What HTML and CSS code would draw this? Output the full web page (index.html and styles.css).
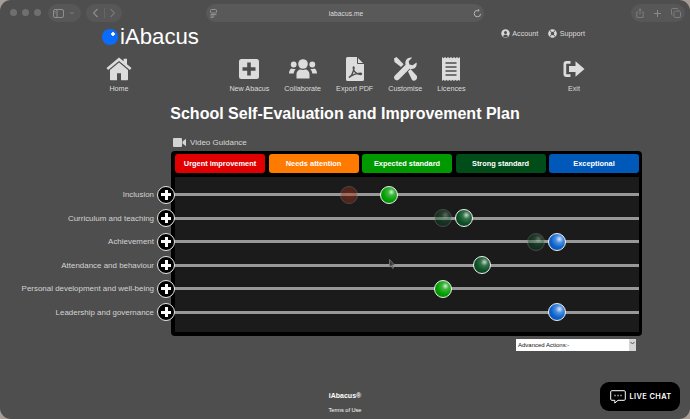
FILE: index.html
```html
<!DOCTYPE html>
<html lang="en">
<head>
<meta charset="utf-8">
<title>iAbacus</title>
<link rel="stylesheet" href="styles.css">
</head>
<body>
<div class="window">
  <div class="chrome">
    <div class="lights"><i></i><i></i><i></i></div>
    <div class="pill side">
      <svg width="11" height="9" viewBox="0 0 11 9" fill="none" stroke="#8f8f8f"><rect x=".5" y=".5" width="10" height="8" rx="1.5"/><path d="M4 .5v8"/><path d="M1.5 2.5h1M1.5 4h1"/></svg>
      <svg width="6" height="4" viewBox="0 0 6 4" fill="none" stroke="#7c7c7c"><path d="M1 1l2 2 2-2"/></svg>
    </div>
    <div class="pill navpill">
      <svg width="7" height="10" viewBox="0 0 7 10" fill="none" stroke="#8f8f8f" stroke-width="1.1"><path d="M5.5 1L1.5 5l4 4"/></svg>
      <span class="sep"></span>
      <svg width="7" height="10" viewBox="0 0 7 10" fill="none" stroke="#777" stroke-width="1.1"><path d="M1.5 1l4 4-4 4"/></svg>
    </div>
    <div class="address">
      <svg width="7" height="9" viewBox="0 0 7 9" fill="none" stroke="#999" stroke-width=".9"><rect x=".5" y=".5" width="6" height="3.5" rx="1"/><path d="M.5 5.5h6M.5 7h4M.5 8.4h3"/></svg>
      <span class="url">iabacus.me</span>
      <svg width="9" height="9" viewBox="0 0 9 9" fill="none" stroke="#b5b5b5" stroke-width="1"><path d="M7.6 4.8A3.2 3.2 0 1 1 4.5 1.4H6"/><path d="M4.8.2L6.2 1.4 4.8 2.6" /></svg>
    </div>
    <div class="pill tools">
      <svg width="8" height="10" viewBox="0 0 8 10" fill="none" stroke="#7e7e7e"><path d="M2 4H.8v5.4h6.4V4H6M4 6.5V.8M2.5 2.2L4 .8l1.5 1.4"/></svg>
      <svg width="9" height="9" viewBox="0 0 9 9" fill="none" stroke="#8a8a8a"><path d="M4.5 1v7M1 4.5h7"/></svg>
      <svg width="10" height="10" viewBox="0 0 10 10" fill="none" stroke="#7e7e7e"><rect x="3" y="3" width="6.5" height="6.5" rx="1.5"/><path d="M7 1.5A1 1 0 0 0 6 .5H1.5a1 1 0 0 0-1 1V6a1 1 0 0 0 1 1"/></svg>
    </div>
  </div>

  <header class="masthead">
    <div class="logo"><span class="logo-dot"></span><span class="logo-text">iAbacus</span></div>
    <div class="links">
      <a class="link"><svg width="9" height="9" viewBox="0 0 9 9"><circle cx="4.5" cy="4.5" r="4.2" fill="#d8d8d8"/><circle cx="4.5" cy="3.4" r="1.5" fill="#4d4d4d"/><path d="M2 7.2a2.6 2.2 0 0 1 5 0 3.5 3.5 0 0 1-5 0z" fill="#4d4d4d"/></svg>Account</a>
      <a class="link"><svg width="9" height="9" viewBox="0 0 9 9"><circle cx="4.5" cy="4.5" r="4.3" fill="#d8d8d8"/><circle cx="4.5" cy="4.5" r="1.7" fill="#4d4d4d"/><path d="M2 1.4l1.4 2M7 1.4L5.6 3.4M2 7.6l1.4-2M7 7.6L5.6 5.6" stroke="#4d4d4d" stroke-width="1"/></svg>Support</a>
    </div>
  </header>

  <nav class="mainnav">
    <a class="nav-item">
      <svg class="icon" width="26" height="24" viewBox="0 0 26 24" fill="#dcdcdc"><path d="M13 5.5L4 13v9.2c0 .6.4 1 1 1h6v-7h4v7h6c.6 0 1-.4 1-1V13z"/><path d="M13 .5L.5 11l1.6 2L13 3.9 23.900 13l1.600-2L21 7.200V1.800h-3.400v2.500z"/></svg>
      <span>Home</span>
    </a>
    <div class="nav-group">
      <a class="nav-item">
        <svg class="icon" width="20" height="24" viewBox="0 0 20 20"><rect width="20" height="20" rx="2.5" fill="#dcdcdc"/><path d="M8.2 3.5h3.6v4.700h4.700v3.600h-4.700v4.700H8.200v-4.700H3.500V8.200h4.700z" fill="#4d4d4d"/></svg>
        <span>New Abacus</span>
      </a>
      <a class="nav-item">
        <svg class="icon" width="28" height="24" viewBox="0 0 28 20" fill="#dcdcdc"><circle cx="14" cy="5" r="4.8"/><circle cx="4.7" cy="5.5" r="2.9"/><circle cx="23.3" cy="5.5" r="2.9"/><path d="M7.500 19.500v-4c0-3.300 2.500-5 4-5 1 .6 4 .6 5 0 1.500 0 4 1.700 4 5v4z"/><path d="M0 14.500c0-3 1.500-5 3-5 1 .7 2.500.7 3.700.4-1.200 1.200-1.900 3-2 4.600z"/><path d="M28 14.500c0-3-1.500-5-3-5-1 .7-2.500.7-3.700.4 1.200 1.200 1.900 3 2 4.600z"/></svg>
        <span>Collaborate</span>
      </a>
      <a class="nav-item">
        <svg class="icon" width="18" height="24" viewBox="0 0 18 24"><path d="M1.500 0H11l7 7v15.500A1.500 1.500 0 0 1 16.500 24h-15A1.500 1.500 0 0 1 0 22.500v-21A1.500 1.500 0 0 1 1.500 0z" fill="#dcdcdc"/><path d="M11.500 0v6.500H18" fill="none" stroke="#4d4d4d" stroke-width="1"/><path d="M3 20.500c2-1 4-4.500 5-9 .4-2-.8-2.200-.8-.6 0 3 3 6.200 7.500 6.600 1.400 0 1.200-1.400-.5-1.300-3 .2-7 1.200-9.500 2.900-1.200.8-1.700 1.400-1.700 1.400z" fill="none" stroke="#4d4d4d" stroke-width="1.300"/></svg>
        <span>Export PDF</span>
      </a>
      <a class="nav-item">
        <svg class="icon" width="24" height="24" viewBox="0 0 24 24" fill="#dcdcdc"><path d="M1 1.500L3.500 0l7.200 7.200-2.700 2.800L1.500 5z"/><path d="M15 14.500l2.500-2.500 6 6.500c1 1.200.8 3-.4 4.200-1.300 1.200-3 1.300-4.200 0z"/><path d="M23.500 5.500c.6 2.500-.2 4.500-2 5.800-1.400 1-3.300 1-4.900.4L5.900 22.600c-1.100 1.100-2.800 1.100-4 0-1.200-1.200-1.200-3 0-4.200L12.600 7.700c-.6-2-.3-3.800 1.100-5.400C15.100.8 17.100.1 19.200.6l-3.500 3.600.7 3.200 3.300.8z"/></svg>
        <span>Customise</span>
      </a>
      <a class="nav-item">
        <svg class="icon" width="18" height="24" viewBox="0 0 18 24" fill="#dcdcdc"><path d="M0 0l1.500 1.200L3 0l1.500 1.200L6 0l1.500 1.200L9 0l1.500 1.200L12 0l1.500 1.200L15 0l1.500 1.200L18 0v24l-1.500-1.200L15 24l-1.500-1.200L12 24l-1.500-1.200L9 24l-1.500-1.200L6 24l-1.500-1.200L3 24l-1.500-1.200L0 24z"/><path d="M3.500 6h11M3.500 10h11M3.500 14h11M3.500 18h11" stroke="#4d4d4d" stroke-width="1.400"/></svg>
        <span>Licences</span>
      </a>
    </div>
    <a class="nav-item">
      <svg class="icon" width="22" height="24" viewBox="0 0 22 18" fill="#dcdcdc"><path d="M7.500 1H3.500A3 3 0 0 0 .5 4v10a3 3 0 0 0 3 3h4v-2.700H3.800c-.3 0-.6-.3-.6-.6V4.300c0-.3.300-.6.600-.6h3.700z"/><path d="M12.500 1.300L21.500 9l-9 7.700V12H6V6h6.500z"/></svg>
      <span>Exit</span>
    </a>
  </nav>

  <h1 class="title">School Self-Evaluation and Improvement Plan</h1>

  <main class="content">
    <div class="guidance">
      <svg width="13" height="9" viewBox="0 0 13 9" fill="#d4d4d4"><rect width="9" height="9" rx="1"/><path d="M9.500 3.500L13 .8v7.400L9.500 5.500z"/></svg>
      <span>Video Guidance</span>
    </div>
    <section class="panel">
      <div class="levels">
        <div class="level urgent">Urgent improvement</div>
        <div class="level needs">Needs attention</div>
        <div class="level expected">Expected standard</div>
        <div class="level strong">Strong standard</div>
        <div class="level exceptional">Exceptional</div>
      </div>
      <div class="rows">
        <div class="row"><span class="row-label">Inclusion</span><button class="plus"></button>
          <div class="track"><i class="knob ghost red" style="left:178px"></i><i class="knob green" style="left:218px"></i></div></div>
        <div class="row"><span class="row-label">Curriculum and teaching</span><button class="plus"></button>
          <div class="track"><i class="knob ghost dark" style="left:272px"></i><i class="knob dark" style="left:293px"></i></div></div>
        <div class="row"><span class="row-label">Achievement</span><button class="plus"></button>
          <div class="track"><i class="knob ghost dark" style="left:365px"></i><i class="knob blue" style="left:386px"></i></div></div>
        <div class="row"><span class="row-label">Attendance and behaviour</span><button class="plus"></button>
          <div class="track"><i class="knob dark" style="left:311px"></i></div></div>
        <div class="row"><span class="row-label">Personal development and well-being</span><button class="plus"></button>
          <div class="track"><i class="knob green" style="left:272px"></i></div></div>
        <div class="row"><span class="row-label">Leadership and governance</span><button class="plus"></button>
          <div class="track"><i class="knob blue" style="left:386px"></i></div></div>
      </div>
    </section>
    <div class="actions">
      <div class="select"><span>Advanced Actions:-</span><b class="select-arrow"><svg width="5" height="4" viewBox="0 0 5 4" fill="none" stroke="#555"><path d="M.5 1l2 2 2-2"/></svg></b></div>
    </div>
  </main>

  <footer class="footer">
    <strong>iAbacus®</strong>
    <a>Terms of Use</a>
  </footer>

  <svg class="cursor" width="7" height="10" viewBox="0 0 7 10" fill="#3a3a3a" stroke="#888" stroke-width=".7"><path d="M.5.500v7.500l1.800-1.500 1.300 3 1-.5-1.300-2.900 2.300-.2z"/></svg>

  <div class="chat">
    <svg width="16" height="14" viewBox="0 0 16 14" fill="none" stroke="#fff" stroke-width="1"><path d="M1.800.7h12.400c.6 0 1.100.5 1.100 1.100v7.400c0 .6-.5 1.100-1.100 1.100H8l-3.200 2.800v-2.800h-3c-.6 0-1.100-.5-1.100-1.100V1.800C.7 1.200 1.200.7 1.800.7z"/><path d="M4.500 5.500h1M7.500 5.500h1M10.500 5.500h1" stroke-width="1.300"/></svg>
    <span>LIVE CHAT</span>
  </div>
</div>
</body>
</html>
```
FILE: styles.css
```css
* { box-sizing: border-box; }
html, body { margin: 0; height: 100%; background: #a89c96; overflow: hidden; }
body { font-family: "Liberation Sans", Arial, sans-serif; color: #dcdcdc; }
a { color: inherit; text-decoration: none; }

.window {
  position: relative;
  width: 690px;
  height: 419px;
  background: #4e4e4e;
  border-radius: 11px;
  overflow: hidden;
  display: flex;
  flex-direction: column;
}

.chrome {
  height: 26px;
  flex: none;
  display: flex;
  align-items: flex-start;
  padding: 4px 5px 0 10px;
}
.lights { display: flex; gap: 5px; margin-top: 5px; width: 38px; }
.lights i { width: 7px; height: 7px; border-radius: 50%; background: #6f6f6f; }
.pill {
  height: 18px;
  border-radius: 9px;
  background: #575757;
  display: flex;
  align-items: center;
  justify-content: space-between;
}
.side { width: 33px; padding: 0 6px 0 5px; }
.navpill { width: 36px; margin-left: 5px; padding: 0 6px; }
.sep { width: 1px; height: 10px; background: #666; }
.address {
  width: 278px;
  height: 18px;
  margin-left: 84px;
  border-radius: 9px;
  background: #595959;
  display: flex;
  align-items: center;
  padding: 0 2px 0 4px;
  justify-content: space-between;
}
.url { font-size: 6.6px; color: #dcdcdc; margin-left: 2px; letter-spacing: .1px; }
.tools { width: 54px; margin-left: auto; padding: 0 4px 0 5px; }

.masthead {
  height: 26px;
  flex: none;
  display: flex;
  justify-content: space-between;
  align-items: flex-start;
  padding: 0 105px 0 102px;
}
.logo { display: flex; align-items: center; height: 22px; }
.logo-dot {
  width: 16px;
  height: 16px;
  border-radius: 50%;
  margin-right: 2px;
  background: radial-gradient(circle at 11px 5px, #fff 0 1.5px, #0a6cff 2px);
}
.logo-text { font-size: 22.2px; color: #fff; line-height: 22px; }
.links { display: flex; gap: 10px; margin-top: 2px; }
.link { display: flex; align-items: center; gap: 2.5px; font-size: 7.2px; height: 10px; color: #dcdcdc; }

.mainnav {
  flex: none;
  height: 44px;
  margin-top: 5px;
  display: flex;
  justify-content: space-between;
  align-items: flex-start;
  padding: 0 105px 0 106px;
}
.nav-group { display: flex; gap: 15px; }
.nav-item {
  display: flex;
  flex-direction: column;
  align-items: center;
  font-size: 7.2px;
  color: #dcdcdc;
}
.icon { height: 24px; flex: none; margin-bottom: 3px; }
.nav-item span { line-height: 9px; white-space: nowrap; }

.title {
  margin: 2px 0 0;
  height: 22px;
  font-size: 16px;
  line-height: 22px;
  font-weight: bold;
  color: #fff;
  text-align: center;
}

.content { flex: none; padding-left: 171px; margin-top: 11px; }
.guidance {
  display: flex;
  align-items: center;
  gap: 4px;
  padding-left: 2px;
  height: 12px;
  font-size: 8px;
  color: #d8d8d8;
}
.panel {
  width: 471px;
  height: 185px;
  margin-top: 3px;
  padding: 3px 3px 4px 4px;
  background: #000;
  border-radius: 4px;
}
.levels { display: grid; grid-template-columns: repeat(5, 90px); gap: 3.5px; }
.level {
  height: 19px;
  border-radius: 3px;
  font-size: 7.4px;
  line-height: 19px;
  font-weight: bold;
  text-align: center;
  color: #fff;
}
.urgent { background: #e00000; }
.needs { background: #ff7a00; }
.expected { background: #009a00; }
.strong { background: #004d1a; }
.exceptional { background: #0059b8; }

.rows {
  margin: 4px 0 0 -175px;
  height: 155px;
  background: linear-gradient(#1b1b1b, #1b1b1b) no-repeat 175px 0 / 464px 155px;
  padding-top: 6px;
}
.row { height: 23.5px; display: flex; align-items: center; }
.row-label {
  width: 154px;
  flex: none;
  font-size: 7.95px;
  text-align: right;
  color: #d4d4d4;
  white-space: nowrap;
}
.plus {
  position: relative;
  z-index: 1;
  flex: none;
  width: 18px;
  height: 18px;
  margin: 0 -4px 0 3px;
  padding: 0;
  border: 1.2px solid #e8e8e8;
  border-radius: 50%;
  background:
    linear-gradient(#fff, #fff) center / 10px 3px no-repeat,
    linear-gradient(#fff, #fff) center / 3px 10px no-repeat,
    #000;
}
.track { position: relative; flex: 1; height: 3px; background: #989898; }
.knob {
  position: absolute;
  top: 50%;
  width: 18px;
  height: 18px;
  margin: -9px 0 0 -9px;
  border-radius: 50%;
  border: 1.5px solid #f2f2f2;
}
.knob.green { background: radial-gradient(circle at 65% 32%, #d8f0d8 0, #3fb53f 22%, #00a000 55%, #007800 100%); }
.knob.dark { background: radial-gradient(circle at 65% 32%, #c8d8cc 0, #35714a 25%, #0c5026 55%, #053a18 100%); }
.knob.blue { background: radial-gradient(circle at 65% 32%, #dceaff 0, #4c8fe0 25%, #0b62cc 55%, #074b9e 100%); }
.knob.red { background: radial-gradient(circle at 50% 50%, #b53a1e 0, #8f2a10 100%); }
.knob.ghost { opacity: .42; border-color: #8a8a8a; }

.actions { width: 465px; display: flex; justify-content: flex-end; margin-top: 3px; }
.select {
  width: 120px;
  height: 12px;
  background: #fff;
  color: #111;
  font-size: 6px;
  line-height: 12px;
  padding-left: 2px;
  display: flex;
  justify-content: space-between;
}
.select-arrow {
  width: 7px;
  height: 12px;
  background: #d4d4d4;
  display: flex;
  align-items: flex-start;
  justify-content: center;
  padding-top: 2px;
}

.footer {
  margin-top: 41px;
  display: flex;
  flex-direction: column;
  align-items: center;
  gap: 6px;
  color: #fff;
}
.footer strong { font-size: 7px; line-height: 8px; }
.footer a { font-size: 5.6px; line-height: 8px; }

.cursor { position: absolute; left: 389px; top: 259px; }
.chat {
  position: absolute;
  left: 600px;
  top: 382px;
  width: 80px;
  height: 29px;
  border-radius: 9px;
  background: #000;
  display: flex;
  align-items: center;
  gap: 3.5px;
  padding-left: 10px;
  color: #fff;
  font-family: Inter, "Liberation Sans", sans-serif;
  font-size: 7.4px;
  font-weight: 600;
  letter-spacing: .4px;
}
```
